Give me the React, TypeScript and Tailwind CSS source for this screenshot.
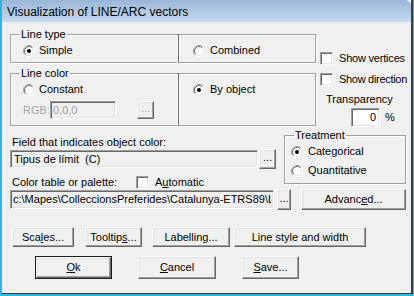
import type { ReactNode } from "react";

// --- małe kontrolki w stylu klasycznego okna dialogowego ---

function Radio({ checked = false }: { checked?: boolean }) {
  return (
    <svg width="12" height="12" viewBox="0 0 12 12" className="shrink-0">
      <circle cx="6" cy="6" r="4.5" fill="#fff" />
      <path d="M2.11 9.89A5.5 5.5 0 0 1 9.89 2.11" fill="none" stroke="#a0a0a0" />
      <path d="M9.89 2.11A5.5 5.5 0 0 1 2.11 9.89" fill="none" stroke="#fff" />
      <path d="M2.82 9.18A4.5 4.5 0 0 1 9.18 2.82" fill="none" stroke="#696969" />
      <path d="M9.18 2.82A4.5 4.5 0 0 1 2.82 9.18" fill="none" stroke="#e3e3e3" />
      {checked && <circle cx="6" cy="6" r="2" fill="#000" />}
    </svg>
  );
}

function Check() {
  return (
    <div className="h-[13px] w-[13px] shrink-0 border border-b-white border-l-[#a0a0a0] border-r-white border-t-[#a0a0a0] bg-white shadow-[inset_1px_1px_0_#696969,inset_-1px_-1px_0_#e3e3e3]" />
  );
}

function Btn({
  className = "",
  children,
  disabled = false,
}: {
  className?: string;
  children: ReactNode;
  disabled?: boolean;
}) {
  return (
    <div
      className={`flex shrink-0 items-center justify-center whitespace-nowrap border border-b-[#696969] border-l-white border-r-[#696969] border-t-white bg-[#f0f0f0] shadow-[inset_-1px_-1px_0_#a0a0a0,inset_1px_1px_0_#e3e3e3] ${
        disabled ? "text-[#a0a0a0]" : "text-black"
      } ${className}`}
    >
      {children}
    </div>
  );
}

function Field({ className = "", children }: { className?: string; children?: ReactNode }) {
  return (
    <div
      className={`flex shrink-0 items-center overflow-hidden whitespace-nowrap border border-b-white border-l-[#a0a0a0] border-r-white border-t-[#a0a0a0] shadow-[inset_1px_1px_0_#696969,inset_-1px_-1px_0_#e3e3e3] ${className}`}
    >
      {children}
    </div>
  );
}

// etykieta na ramce grupy (leży na linii ramki)
function GroupLabel({ children }: { children: ReactNode }) {
  return (
    <span className="absolute -top-[7px] left-[9px] bg-[#f0f0f0] px-[1px] leading-[13px]">
      {children}
    </span>
  );
}

const etched =
  "border-[#a0a0a0] shadow-[inset_1px_1px_0_#fff,1px_1px_0_#fff]";

export default function App() {
  return (
    <div className="h-[296px] w-[414px] overflow-hidden bg-[#2bb6e6] pb-[2px] pl-[2px] pr-[1px] font-['Liberation_Sans',Arial,sans-serif] text-[11px] leading-[13px] text-black">
      <div className="flex h-full flex-col border-b border-r-2 border-b-[#3d3d3d] border-r-[#3d3d3d] bg-[#f0f0f0]">
        {/* PASEK TYTUŁU */}
        <div className="flex h-[22px] shrink-0 items-center rounded-tr-[6px] bg-gradient-to-b from-[#9ab6d8] to-[#c6dbf0] pl-[5px] pt-[2px] text-[12px]">
          Visualization of LINE/ARC vectors
        </div>

        <div className="flex flex-col pl-[8px]">
          {/* GÓRNA CZĘŚĆ: typ linii, kolor linii, opcje */}
          <div className="mt-[12px] flex items-start">
            <div className="flex w-[306px] shrink-0 flex-col">
              {/* Line type */}
              <div className="flex h-[29px]">
                <div className={`relative w-[167px] border-b border-l border-t ${etched}`}>
                  <GroupLabel>Line type</GroupLabel>
                  <div className="mt-[9px] flex h-[13px] items-center gap-[4px] pl-[12px]">
                    <Radio checked />
                    <span>Simple</span>
                  </div>
                </div>
                <div className="w-[2px] bg-[#6d6d6d]" />
                <div className={`w-[137px] border-b border-r border-t ${etched}`}>
                  <div className="mt-[9px] flex h-[13px] items-center gap-[5px] pl-[14px]">
                    <Radio />
                    <span>Combined</span>
                  </div>
                </div>
              </div>

              {/* Line color */}
              <div className="mt-[10px] flex h-[53px]">
                <div className={`relative w-[167px] border-b border-l border-t ${etched}`}>
                  <GroupLabel>Line color</GroupLabel>
                  <div className="mt-[9px] flex h-[13px] items-center gap-[4px] pl-[12px]">
                    <Radio />
                    <span>Constant</span>
                  </div>
                  <div className="mt-[5px] flex items-center pl-[12px]">
                    <span className="w-[27px] text-[#a0a0a0] [text-shadow:1px_1px_0_#fff]">RGB:</span>
                    <Field className="h-[18px] w-[66px] bg-[#f0f0f0] pl-[2px] text-[#a0a0a0]">
                      0,0,0
                    </Field>
                    <Btn disabled className="ml-[21px] h-[18px] w-[17px] pb-[3px]">
                      ...
                    </Btn>
                  </div>
                </div>
                <div className="w-[2px] bg-[#6d6d6d]" />
                <div className={`w-[137px] border-b border-r border-t ${etched}`}>
                  <div className="mt-[9px] flex h-[13px] items-center gap-[5px] pl-[14px]">
                    <Radio checked />
                    <span>By object</span>
                  </div>
                </div>
              </div>
            </div>

            {/* prawa kolumna */}
            <div className="flex flex-col whitespace-nowrap pl-[4px]">
              <div className="mt-[18px] flex items-center gap-[6px]">
                <Check />
                <span className="tracking-[-0.2px]">Show vertices</span>
              </div>
              <div className="mt-[8px] flex items-center gap-[6px]">
                <Check />
                <span className="tracking-[-0.3px]">Show direction</span>
              </div>
              <span className="mt-[7px] pl-[6px]">Transparency</span>
              <div className="mt-[2px] flex items-center">
                <Field className="ml-[31px] h-[19px] w-[29px] justify-end bg-white pr-[3px]">0</Field>
                <span className="ml-[5px]">%</span>
              </div>
            </div>
          </div>

          {/* ŚRODEK: pole koloru + Treatment */}
          <div className="mt-[2px] flex items-start">
            <div className="flex w-[266px] shrink-0 flex-col">
              <span className="mt-[7px] pl-[2px]">Field that indicates object color:</span>
              <div className="flex h-[20px] items-center">
                <Field className="h-[18px] w-[248px] bg-[#f0f0f0] pl-[3px]">
                  Tipus de límit&nbsp;&nbsp;(C)
                </Field>
                <Btn className="ml-[1px] h-[20px] w-[17px] pb-[3px]">...</Btn>
              </div>
              <div className="mt-[7px] flex h-[13px] items-center">
                <span className="w-[126px] pl-[2px]">Color table or palette:</span>
                <Check />
                <span className="ml-[6px]">
                  A<span className="underline">u</span>tomatic
                </span>
              </div>
            </div>

            <div className={`relative ml-[8px] mt-[6px] h-[49px] w-[122px] border ${etched}`}>
              <GroupLabel>Treatment</GroupLabel>
              <div className="mt-[9px] flex h-[13px] items-center gap-[5px] pl-[6px]">
                <Radio checked />
                <span>Categorical</span>
              </div>
              <div className="mt-[6px] flex h-[13px] items-center gap-[5px] pl-[6px]">
                <Radio />
                <span>Quantitative</span>
              </div>
            </div>
          </div>

          {/* ścieżka palety */}
          <div className="flex h-[21px] items-center">
            <Field className="h-[19px] w-[264px] bg-[#f0f0f0] pl-[2px]">
              <span className="w-[258px] overflow-hidden">
                c:\Mapes\ColleccionsPreferides\Catalunya-ETRS89\L
              </span>
            </Field>
            <Btn className="ml-[3px] h-[21px] w-[14px] pb-[3px]">...</Btn>
            <Btn className="ml-[10px] h-[21px] w-[105px]">
              <span>
                Advanc<span className="underline">e</span>d...
              </span>
            </Btn>
          </div>

          {/* rząd przycisków */}
          <div className="mt-[17px] flex h-[20px] items-stretch">
            <Btn className="ml-[2px] w-[62px]">
              <span>
                Sca<span className="underline">l</span>es...
              </span>
            </Btn>
            <Btn className="ml-[11px] w-[57px]">
              <span>
                Tooltip<span className="underline">s</span>...
              </span>
            </Btn>
            <Btn className="ml-[10px] w-[78px]">Labelling...</Btn>
            <Btn className="ml-[4px] w-[132px]">Line style and width</Btn>
          </div>

          {/* Ok / Cancel / Save */}
          <div className="mt-[9px] flex h-[23px] items-stretch">
            <div className="ml-[25px] flex w-[77px] border border-[#1a1a1a]">
              <Btn className="w-full">
                <span>
                  <span className="underline">O</span>k
                </span>
              </Btn>
            </div>
            <Btn className="ml-[26px] w-[78px]">
              <span>
                <span className="underline">C</span>ancel
              </span>
            </Btn>
            <Btn className="ml-[26px] w-[57px]">
              <span>
                <span className="underline">S</span>ave...
              </span>
            </Btn>
          </div>
        </div>
      </div>
    </div>
  );
}
